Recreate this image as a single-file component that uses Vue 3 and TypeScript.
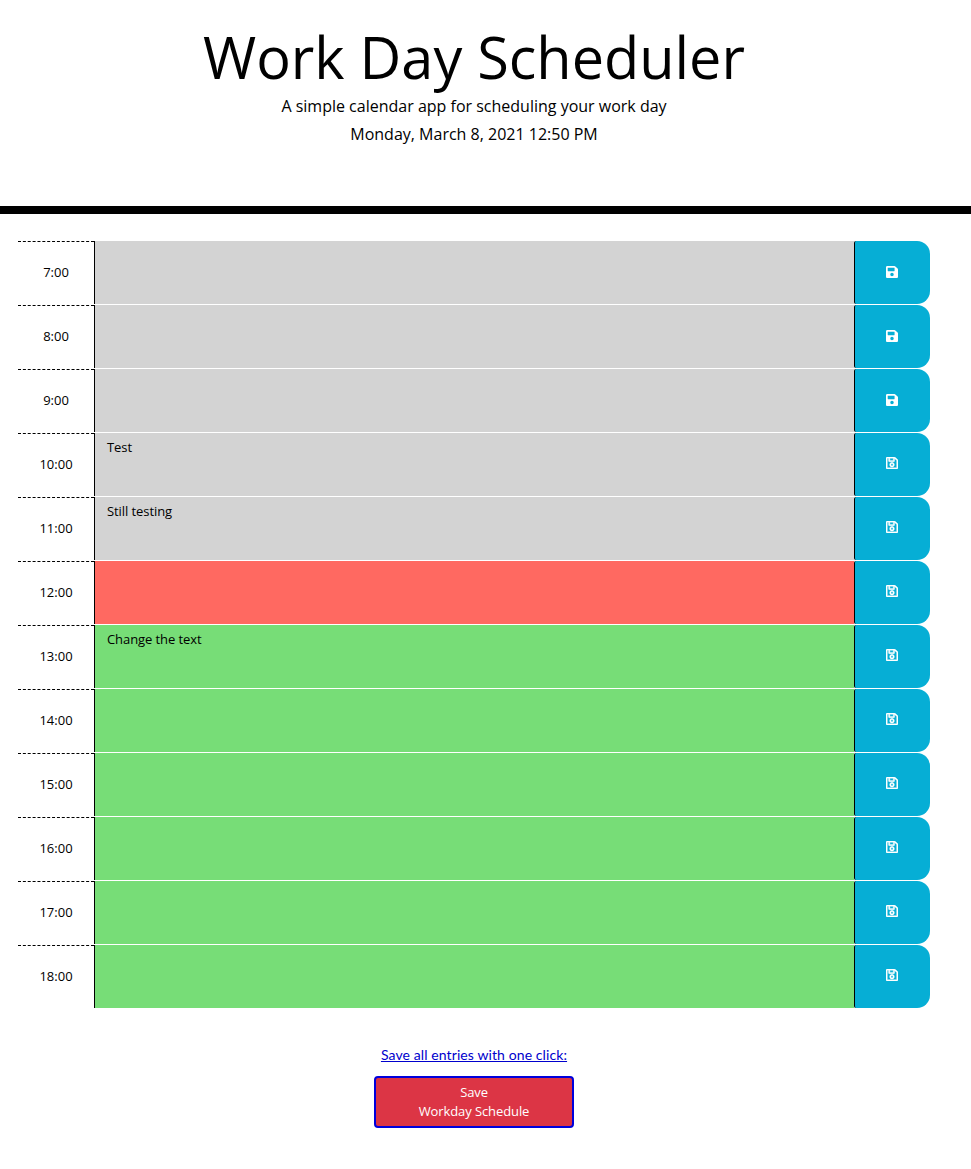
<script setup lang="ts">
import { ref } from 'vue'

type Phase = 'past' | 'present' | 'future'

interface Slot {
  hour: number
  text: string
}

const currentHour = 12
const notes: Record<number, string> = { 10: 'Test', 11: 'Still testing', 13: 'Change the text' }

const slots = ref<Slot[]>(
  Array.from({ length: 12 }, (_, i) => ({ hour: i + 7, text: notes[i + 7] ?? '' })),
)

function phase(hour: number): Phase {
  if (hour < currentHour) return 'past'
  return hour === currentHour ? 'present' : 'future'
}

const solidSave =
  'M433.941 129.941l-83.882-83.882A48 48 0 0 0 316.118 32H48C21.49 32 0 53.49 0 80v352c0 26.51 21.49 48 48 48h352c26.51 0 48-21.49 48-48V163.882a48 48 0 0 0-14.059-33.941zM224 416c-35.346 0-64-28.654-64-64 0-35.346 28.654-64 64-64s64 28.654 64 64c0 35.346-28.654 64-64 64zm96-304.52V212c0 6.627-5.373 12-12 12H76c-6.627 0-12-5.373-12-12V108c0-6.627 5.373-12 12-12h228.52c3.183 0 6.235 1.264 8.485 3.515l3.48 3.48A11.996 11.996 0 0 1 320 111.48z'
const outlineSave =
  'M433.941 129.941l-83.882-83.882A48 48 0 0 0 316.118 32H48C21.49 32 0 53.49 0 80v352c0 26.51 21.49 48 48 48h352c26.51 0 48-21.49 48-48V163.882a48 48 0 0 0-14.059-33.941zM272 80v80H144V80h128zm122 352H54a6 6 0 0 1-6-6V86a6 6 0 0 1 6-6h42v104c0 13.255 10.745 24 24 24h176c13.255 0 24-10.745 24-24V83.882l78.243 78.243a6 6 0 0 1 1.757 4.243V426a6 6 0 0 1-6 6zM224 232c-48.523 0-88 39.477-88 88s39.477 88 88 88 88-39.477 88-88-39.477-88-88-88zm0 128c-22.056 0-40-17.944-40-40s17.944-40 40-40 40 17.944 40 40-17.944 40-40 40z'
</script>

<template>
  <div class="page">
    <header class="masthead">
      <h1 class="title">Work Day Scheduler</h1>
      <p class="lead">A simple calendar app for scheduling your work day</p>
      <p class="lead">Monday, March 8, 2021 12:50 PM</p>
    </header>

    <main class="schedule">
      <div v-for="slot in slots" :key="slot.hour" class="row">
        <div class="hour">{{ slot.hour }}:00</div>
        <div class="entry" :class="phase(slot.hour)">{{ slot.text }}</div>
        <button class="save" type="button" aria-label="Save entry">
          <svg class="icon" :class="{ solid: slot.hour < 10 }" viewBox="0 32 448 448">
            <path :d="slot.hour < 10 ? solidSave : outlineSave" />
          </svg>
        </button>
      </div>
    </main>

    <footer class="footer">
      <p class="caption">Save all entries with one click:</p>
      <button class="save-all" type="button">Save<br />Workday Schedule</button>
    </footer>
  </div>
</template>

<style>
body {
  margin: 0;
  background: #fff;
}
</style>

<style scoped>
.page {
  min-height: 1169px;
  font-family: 'Open Sans', sans-serif;
  color: #000;
}

.masthead {
  box-sizing: border-box;
  height: 214px;
  padding: 23px 23px 0 0;
  border-bottom: 8px solid #000;
  text-align: center;
}

.title {
  margin: 0 0 1px;
  font-size: 57.6px;
  font-weight: 400;
  line-height: 68px;
}

.lead {
  margin: 0;
  font-size: 16px;
  line-height: 28px;
}

.schedule {
  width: 912px;
  margin: 27px 0 0 18px;
}

.row {
  display: grid;
  grid-template-columns: 76px 760px 76px;
  height: 63px;
  margin-bottom: 1px;
}

.hour {
  display: flex;
  align-items: center;
  justify-content: center;
  padding-bottom: 2px;
  border-top: 1px dashed #000;
  font-size: 13px;
}

.entry {
  padding: 4px 12px;
  border-left: 1px solid #000;
  font-size: 13px;
  line-height: 20px;
  letter-spacing: -0.08px;
}

.past {
  background: #d3d3d3;
}

.present {
  background: #ff6961;
}

.future {
  background: #77dd77;
}

.save {
  display: flex;
  align-items: center;
  justify-content: center;
  padding: 0;
  border: 0;
  border-left: 1px solid #000;
  border-radius: 2px 13px 13px 2px;
  background: #06aed5;
}

.icon {
  width: 12px;
  height: 12px;
  margin: 0 1px 3px 0;
  fill: #fff;
  stroke: #fff;
  stroke-width: 14px;
}

.icon.solid {
  margin-bottom: 1px;
  stroke: none;
}

.footer {
  display: flex;
  flex-direction: column;
  align-items: center;
  width: 948px;
  padding-top: 36px;
}

.caption {
  margin: 0 0 11px;
  color: #0000cd;
  font-family: 'Gill Sans MT', Lato, sans-serif;
  font-size: 14px;
  line-height: 20px;
  letter-spacing: 0.1px;
  text-decoration: underline;
}

.save-all {
  width: 200px;
  height: 52px;
  padding: 0;
  border: 2px solid #0000dc;
  border-radius: 4px;
  background: #dc3545;
  color: #fff;
  font-family: inherit;
  font-size: 13px;
  line-height: 19px;
  letter-spacing: -0.1px;
}
</style>
